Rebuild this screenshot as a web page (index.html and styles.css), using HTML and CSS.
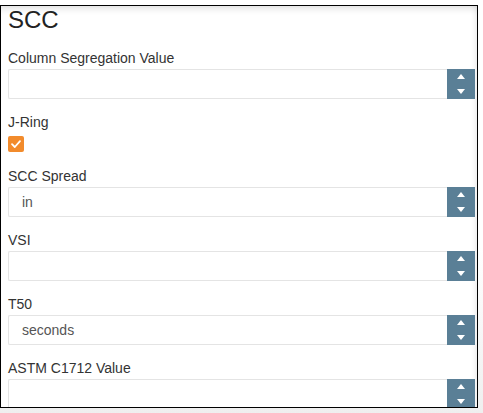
FILE: index.html
```html
<!DOCTYPE html>
<html>
<head>
<meta charset="utf-8">
<link rel="stylesheet" href="styles.css">
</head>
<body>
<div class="frame">
  <div class="panel">
    <h1 class="title">SCC</h1>

    <div class="group">
      <label class="label">Column Segregation Value</label>
      <div class="spin">
        <div class="field"></div>
        <div class="btn"><span class="up"></span><span class="down"></span></div>
      </div>
    </div>

    <div class="group group-check">
      <label class="label">J-Ring</label>
      <div class="check">
        <svg width="16" height="16" viewBox="0 0 16 16"><polyline points="4,8.2 6.8,11 12,5.2" fill="none" stroke="#fff" stroke-width="1.8" stroke-linecap="round" stroke-linejoin="round"/></svg>
      </div>
    </div>

    <div class="group">
      <label class="label">SCC Spread</label>
      <div class="spin">
        <div class="field">in</div>
        <div class="btn"><span class="up"></span><span class="down"></span></div>
      </div>
    </div>

    <div class="group">
      <label class="label">VSI</label>
      <div class="spin">
        <div class="field"></div>
        <div class="btn"><span class="up"></span><span class="down"></span></div>
      </div>
    </div>

    <div class="group">
      <label class="label">T50</label>
      <div class="spin">
        <div class="field">seconds</div>
        <div class="btn"><span class="up"></span><span class="down"></span></div>
      </div>
    </div>

    <div class="group">
      <label class="label">ASTM C1712 Value</label>
      <div class="spin">
        <div class="field"></div>
        <div class="btn"><span class="up"></span><span class="down"></span></div>
      </div>
    </div>
  </div>
</div>
</body>
</html>
```

FILE: styles.css
```css
html, body {
  margin: 0;
  padding: 0;
}
body {
  width: 483px;
  height: 413px;
  overflow: hidden;
  background: linear-gradient(#ffffff 0%, #ffffff 60%, #efefef 100%);
  font-family: "Liberation Sans", Arial, sans-serif;
  padding-top: 5px;
  box-sizing: border-box;
}
.frame {
  width: 478px;
  height: 403px;
  box-sizing: border-box;
  border: 1px solid #000;
  background: #fff;
  overflow: hidden;
  position: relative;
  box-shadow: inset 0 9px 8px -8px rgba(0,0,0,0.18), inset -6px 0 5px -4px rgba(0,0,0,0.08);
}
.panel {
  padding: 0 2px 0 7px;
}
.title {
  margin: 0 0 15px;
  font-size: 24px;
  line-height: 27px;
  font-weight: normal;
  color: #222;
}
.group {
  margin-bottom: 13px;
}
.group-check {
  margin-bottom: 14px;
}
.label {
  display: block;
  font-size: 14px;
  line-height: 21px;
  color: #333;
}
.spin {
  display: flex;
  height: 30px;
}
.field {
  flex: 1;
  box-sizing: border-box;
  border: 1px solid #e4e4e4;
  border-right: none;
  border-radius: 2px 0 0 2px;
  padding-left: 13px;
  font-size: 14px;
  line-height: 28px;
  color: #555;
  background: #fff;
}
.btn {
  width: 28px;
  background: #5a7f96;
  display: flex;
  flex-direction: column;
  align-items: center;
  justify-content: center;
  gap: 10px;
}
.up, .down {
  width: 0;
  height: 0;
  border-left: 4px solid transparent;
  border-right: 4px solid transparent;
}
.up {
  border-bottom: 5px solid #fff;
}
.down {
  border-top: 5px solid #fff;
}
.check {
  width: 16px;
  height: 16px;
  margin-top: 3px;
  background: #f28b2c;
  border-radius: 2px;
}
.check svg {
  display: block;
}
```
